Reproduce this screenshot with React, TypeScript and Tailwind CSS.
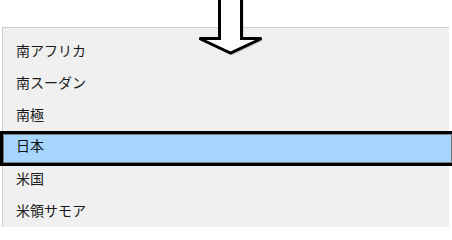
const countries = ['南アフリカ', '南スーダン', '南極', '日本', '米国', '米領サモア']
const selected = '日本'

function DownArrow() {
  const pts = '219.5,-3 241.5,-3 241.5,38.5 261.5,38.5 230.5,53 199.5,38.5 219.5,38.5'
  return (
    <svg
      className="pointer-events-none absolute left-0 top-0"
      width="452"
      height="70"
      viewBox="0 0 452 70"
    >
      <polygon points={pts} transform="translate(2,2)" fill="#9a9a9a" opacity="0.55" />
      <polygon points={pts} fill="#ffffff" stroke="#000000" strokeWidth="3" strokeLinejoin="miter" />
    </svg>
  )
}

export default function App() {
  return (
    <div
      className="relative h-[227px] w-[452px] overflow-hidden bg-white pl-[2px] pt-[27px]"
      style={{ fontFamily: '"Noto Sans CJK JP", "Noto Sans", sans-serif' }}
    >
      {/* List panel */}
      <div className="h-[200px] w-[447px] border-l border-t border-[#cccccc] bg-[#f0f0f0] pt-[6px]">
        {countries.map((name) =>
          name === selected ? (
            <div key={name} className="relative flex h-8 items-center pb-[1px] pl-[13px]">
              <div className="absolute -left-[3px] -right-[6px] top-[1px] h-[35px] border-[3px] border-black bg-[#a6d5fd] shadow-[inset_0_0_0_1px_#7a7a7a]" />
              <span className="relative text-[14px] text-[#111111]">{name}</span>
            </div>
          ) : (
            <div key={name} className="flex h-8 items-center pl-[13px]">
              <span className="text-[14px] text-[#1a1a1a]">{name}</span>
            </div>
          )
        )}
      </div>

      <DownArrow />
    </div>
  )
}
